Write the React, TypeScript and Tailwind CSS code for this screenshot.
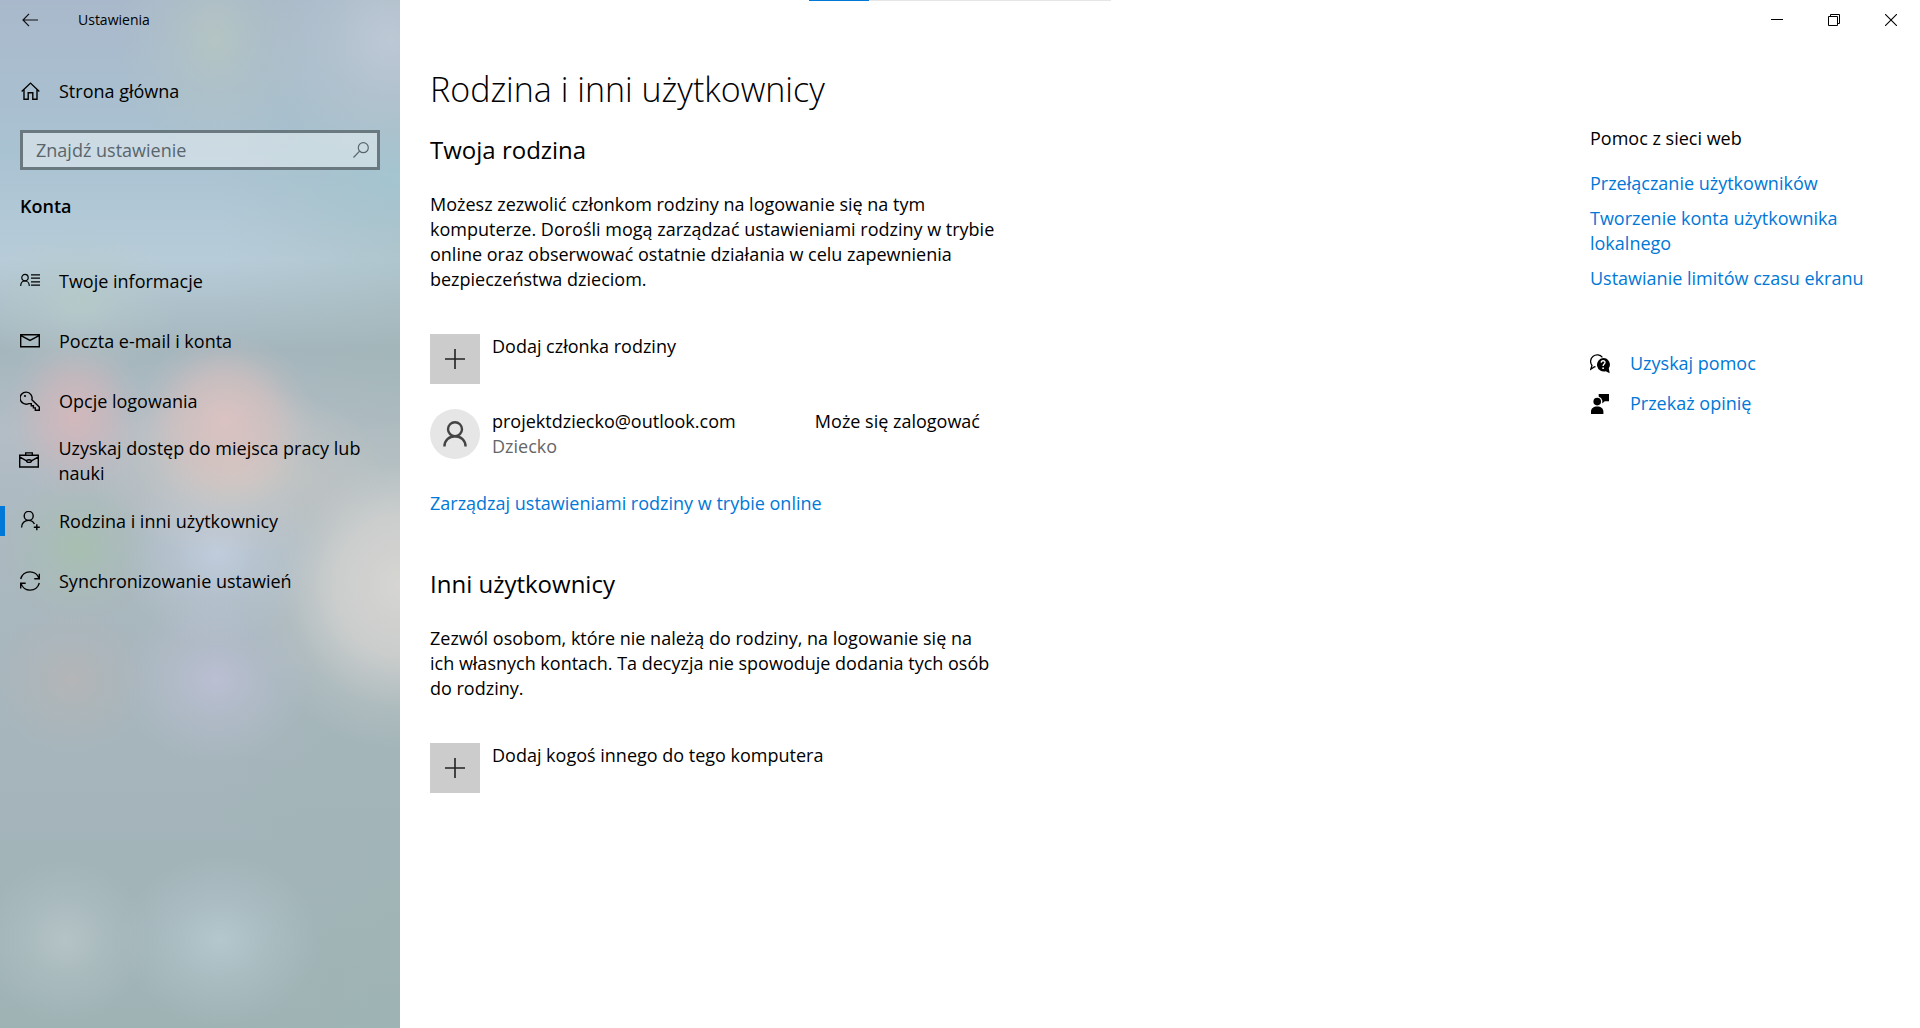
import type { ReactNode } from "react"

const line = {
  fill: "none",
  stroke: "currentColor",
  strokeWidth: 1.4,
}

const navItems: { label: string; icon: ReactNode; active?: boolean }[] = [
  {
    label: "Twoje informacje",
    icon: (
      <svg width="20" height="20" viewBox="0 0 20 20" {...line} strokeWidth="1.2">
        <circle cx="5" cy="6.6" r="3.2" />
        <path d="M.7 15c0-3 1.9-5 4.3-5s4.3 2 4.3 5M11 3.8h9M11 7.2h9M11 10.8h9M11 14.2h9" />
      </svg>
    ),
  },
  {
    label: "Poczta e-mail i konta",
    icon: (
      <svg width="20" height="20" viewBox="0 0 20 20" {...line}>
        <path d="M.7 3.8h18.6v12H.7zM1 4.6l9 4.8 9-4.8" />
      </svg>
    ),
  },
  {
    label: "Opcje logowania",
    icon: (
      <svg width="20" height="20" viewBox="0 0 20 20" {...line}>
        <path d="M11.9 8.7l7.4 7.4v3.2h-4v-2.4h-1.9v-2.1h-2.1v-2.2H8.6a6 6 0 1 1 3.3-3.9z" />
        <circle cx="5" cy="5" r="1.1" fill="currentColor" stroke="none" />
      </svg>
    ),
  },
  {
    label: "Uzyskaj dostęp do miejsca pracy lub nauki",
    icon: (
      <svg width="20" height="20" viewBox="0 0 20 20" {...line}>
        <path d="M.7 4.2h18.6V16H.7zM6.7 4.2V1.9h6.6v2.3M1 6.2l6.6 3.6M19 6.2l-6.6 3.6" />
        <ellipse cx="10" cy="10.1" rx="2.4" ry="1.3" />
      </svg>
    ),
  },
  {
    label: "Rodzina i inni użytkownicy",
    active: true,
    icon: (
      <svg width="20" height="20" viewBox="0 0 20 20" {...line}>
        <circle cx="8.7" cy="4.9" r="4.5" />
        <path d="M1.6 16.4c0-4.2 3-7 7-7 2.6 0 4.6 1.2 5.8 3.6M16.8 13.3v6M13.8 16.3h6" />
      </svg>
    ),
  },
  {
    label: "Synchronizowanie ustawień",
    icon: (
      <svg width="20" height="20" viewBox="0 0 20 20" {...line}>
        <path d="M.7 8A9.5 9.5 0 0 1 19 7.6M19.3 2.7v5.1h-5M19.3 12A9.5 9.5 0 0 1 1 12.4M.7 17.5v-5.2h5" />
      </svg>
    ),
  },
]

function AddButton({ label }: { label: string }) {
  return (
    <button className="flex items-start gap-3 text-left">
      <span className="flex h-[50px] w-[50px] shrink-0 items-center justify-center bg-[#ccc]">
        <svg width="20" height="20" viewBox="0 0 20 20" fill="none" stroke="#222" strokeWidth="1.6">
          <path d="M10 0v20M0 10h20" />
        </svg>
      </span>
      <span>{label}</span>
    </button>
  )
}

function Sidebar() {
  return (
    <aside className="w-[400px] shrink-0 bg-[radial-gradient(95px_120px_at_215px_40px,#b4c4c3,#b4c4c366_45%,#b4c4c300),radial-gradient(130px_130px_at_390px_40px,#bdc8d5,#bdc8d577_45%,#bdc8d500),radial-gradient(160px_80px_at_400px_178px,#a4c5d1,#a4c5d166_45%,#a4c5d100),radial-gradient(100px_75px_at_80px_300px,#b6c9c9,#b6c9c966_45%,#b6c9c900),radial-gradient(70px_85px_at_75px_415px,#d2b8bc,#d0b7bb99_45%,#d0b7bb22_80%,#d0b7bb00),radial-gradient(90px_90px_at_225px_422px,#dac2c1,#d6c0bfaa_50%,#d9c2c022_82%,#d9c2c000),radial-gradient(150px_85px_at_235px_470px,#cfcac5,#cfcac566_50%,#cfcac500),radial-gradient(80px_75px_at_78px_548px,#a7bfb0,#a9bfb377_45%,#a9bfb300),radial-gradient(100px_95px_at_218px_552px,#c0ccdc,#c0ccdc77_45%,#c0ccdc00),radial-gradient(155px_165px_at_400px_585px,#d6d5d2,#d4d3d1cc_42%,#d4d3d133_75%,#d4d3d100),radial-gradient(80px_75px_at_72px_680px,#b4b5b7,#b4b5b766_45%,#b4b5b700),radial-gradient(95px_85px_at_216px_680px,#babfd2,#babfd277_45%,#babfd200),radial-gradient(85px_80px_at_65px_940px,#b4c3c6,#b4c3c677_45%,#b4c3c600),radial-gradient(100px_85px_at_220px_940px,#b4c7cd,#b4c7cd77_45%,#b4c7cd00),linear-gradient(90deg,#ffffff00_55%,#9cb5af44),linear-gradient(#a9b9cb,#a9c2d1_150px,#b7ccd9_260px,#a5b6bd_350px,#b3bdc5_430px,#acb9c1_520px,#a9b7be_610px,#a6b5bc_740px,#a3b4b9_860px,#9fb3b5)] bg-[#a6b5bc]">
      <header className="flex h-10 items-center">
        <button aria-label="Wstecz" className="flex h-10 w-[60px] items-center justify-center">
          <svg width="16" height="14" viewBox="0 0 16 14" fill="none" stroke="#111" strokeWidth="1.2">
            <path d="M7 .8L1 7l6 6.2M1 7h15" />
          </svg>
        </button>
        <span className="ml-[18px] text-sm">Ustawienia</span>
      </header>

      <a href="#" className="mt-[26px] flex h-[50px] items-center gap-[19px] px-[21px]">
        <svg width="19" height="18" viewBox="0 0 19 18" {...line}>
          <path d="M.7 9.5l8.8-8.4 8.8 8.4M3 7.5v9.8h4.2v-6.5h4.6v6.5H16V7.5" />
        </svg>
        Strona główna
      </a>

      <label className="mx-5 mt-[14px] flex h-10 items-center border-[3px] border-[#6a7880] bg-white/40 pr-2 pl-[13px]">
        <input
          type="text"
          aria-label="Znajdź ustawienie"
          placeholder="Znajdź ustawienie"
          className="min-w-0 flex-1 bg-transparent outline-none placeholder:text-[#59656c]"
        />
        <svg width="16" height="16" viewBox="0 0 16 16" fill="none" stroke="#59656c" strokeWidth="1.2">
          <circle cx="10.3" cy="5.7" r="5" />
          <path d="M6.6 9.2L.5 15.5" />
        </svg>
      </label>

      <h2 className="mt-6 px-5 font-semibold">Konta</h2>

      <nav className="mt-8">
        {navItems.map((item) => (
          <a key={item.label} href="#" className="flex h-[60px] items-center">
            <span className={item.active ? "h-[30px] w-[5px] bg-[#0078d7]" : "h-[30px] w-[5px]"} />
            <span className="mr-[19px] ml-[15px] shrink-0">{item.icon}</span>
            <span className="pr-8">{item.label}</span>
          </a>
        ))}
      </nav>
    </aside>
  )
}

function WindowButtons() {
  return (
    <div className="flex h-10 justify-end">
      <button aria-label="Minimalizuj" className="flex w-[57px] items-center justify-center">
        <svg width="12" height="12" viewBox="0 0 12 12" fill="none" stroke="#000">
          <path d="M0 5.5h12" />
        </svg>
      </button>
      <button aria-label="Przywróć" className="flex w-[57px] items-center justify-center">
        <svg width="12" height="12" viewBox="0 0 12 12" fill="none" stroke="#000">
          <path d="M.5 2.5h9v9h-9zM2.5 2.5v-2h9v9h-2" />
        </svg>
      </button>
      <button aria-label="Zamknij" className="flex w-[58px] items-center justify-center">
        <svg width="12" height="12" viewBox="0 0 12 12" fill="none" stroke="#000" strokeWidth="1.1">
          <path d="M0 0l12 12M12 0L0 12" />
        </svg>
      </button>
    </div>
  )
}

function Help() {
  return (
    <aside className="w-[330px] shrink-0 pt-[86px] pr-10 text-[#0078d7]">
      <h2 className="text-black">Pomoc z sieci web</h2>
      <div className="mt-5 flex flex-col items-start gap-[10px]">
        <a href="#">Przełączanie użytkowników</a>
        <a href="#">Tworzenie konta użytkownika lokalnego</a>
        <a href="#">Ustawianie limitów czasu ekranu</a>
      </div>
      <div className="mt-[60px] flex flex-col items-start gap-[15px]">
        <a href="#" className="flex items-center gap-5">
          <svg width="20" height="20" viewBox="0 0 20 20">
            <path d="M5.5 12.6l-1.2.3-3.5 2.3 1.2-3.7A6.4 6.4 0 1 1 12.4 3.4" fill="none" stroke="#000" strokeWidth="1.3" />
            <path d="M13.2 4a6.6 6.6 0 0 1 5.6 10.2l.9 5-4-1.9A6.8 6.8 0 1 1 13.2 4z" fill="#000" />
            <path d="M11.2 8.6c.1-2.6 4-2.4 3.8-.1-.1 1.6-1.9 1.5-1.9 3.4" fill="none" stroke="#fff" strokeWidth="1.4" />
            <circle cx="13.1" cy="14.2" r=".9" fill="#fff" />
          </svg>
          Uzyskaj pomoc
        </a>
        <a href="#" className="flex items-center gap-5">
          <svg width="20" height="20" viewBox="0 0 20 20" fill="#000">
            <circle cx="7.2" cy="7.6" r="3.8" />
            <path d="M1 20v-2.4c0-3 2.5-5 6.2-5s6.2 2 6.2 5V20zM8.7 0H19v7.3h-4.3l-2.4 2.3V6.5A5 5 0 0 0 8.7 2.8z" />
          </svg>
          Przekaż opinię
        </a>
      </div>
    </aside>
  )
}

export default function App() {
  return (
    <div className="relative flex min-h-screen bg-white font-['Open_Sans','Noto_Sans',sans-serif] text-[18px] leading-[25px] text-black">
      <div className="absolute top-0 left-1/2 h-px w-[302px] -translate-x-1/2 bg-[#e6e6e6]">
        <div className="h-px w-[60px] bg-[#0078d7]" />
      </div>

      <Sidebar />

      <div className="flex min-w-0 flex-1 flex-col">
        <WindowButtons />
        <div className="flex flex-1 justify-between">
          <main className="w-[600px] pt-[26px] pl-[30px]">
            <h1 className="text-[34px] leading-[46px] font-light">Rodzina i inni użytkownicy</h1>

            <section className="mt-[22px]">
              <h2 className="text-2xl">Twoja rodzina</h2>
              <p className="mt-[26px]">
                Możesz zezwolić członkom rodziny na logowanie się na tym komputerze. Dorośli mogą zarządzać ustawieniami rodziny w trybie online oraz obserwować ostatnie działania w celu zapewnienia bezpieczeństwa dzieciom.
              </p>
              <div className="mt-[42px]">
                <AddButton label="Dodaj członka rodziny" />
              </div>
              <button className="mt-[25px] flex w-full items-start gap-3 pr-5 text-left">
                <span className="flex h-[50px] w-[50px] shrink-0 items-center justify-center rounded-full bg-[#e6e6e6]">
                  <svg width="24" height="26" viewBox="0 0 24 26" fill="none" stroke="#444" strokeWidth="2.4">
                    <circle cx="12" cy="8.2" r="7" />
                    <path d="M1.4 25.5c0-6 4.6-10.3 10.6-10.3s10.6 4.3 10.6 10.3" />
                  </svg>
                </span>
                <span className="flex-1">
                  projektdziecko@outlook.com
                  <span className="block text-[#666]">Dziecko</span>
                </span>
                <span>Może się zalogować</span>
              </button>
              <a href="#" className="mt-8 inline-block text-[#0078d7]">
                Zarządzaj ustawieniami rodziny w trybie online
              </a>
            </section>

            <section className="mt-[52px]">
              <h2 className="text-2xl">Inni użytkownicy</h2>
              <p className="mt-[26px]">
                Zezwól osobom, które nie należą do rodziny, na logowanie się na ich własnych kontach. Ta decyzja nie spowoduje dodania tych osób do rodziny.
              </p>
              <div className="mt-[42px]">
                <AddButton label="Dodaj kogoś innego do tego komputera" />
              </div>
            </section>
          </main>
          <Help />
        </div>
      </div>
    </div>
  )
}
